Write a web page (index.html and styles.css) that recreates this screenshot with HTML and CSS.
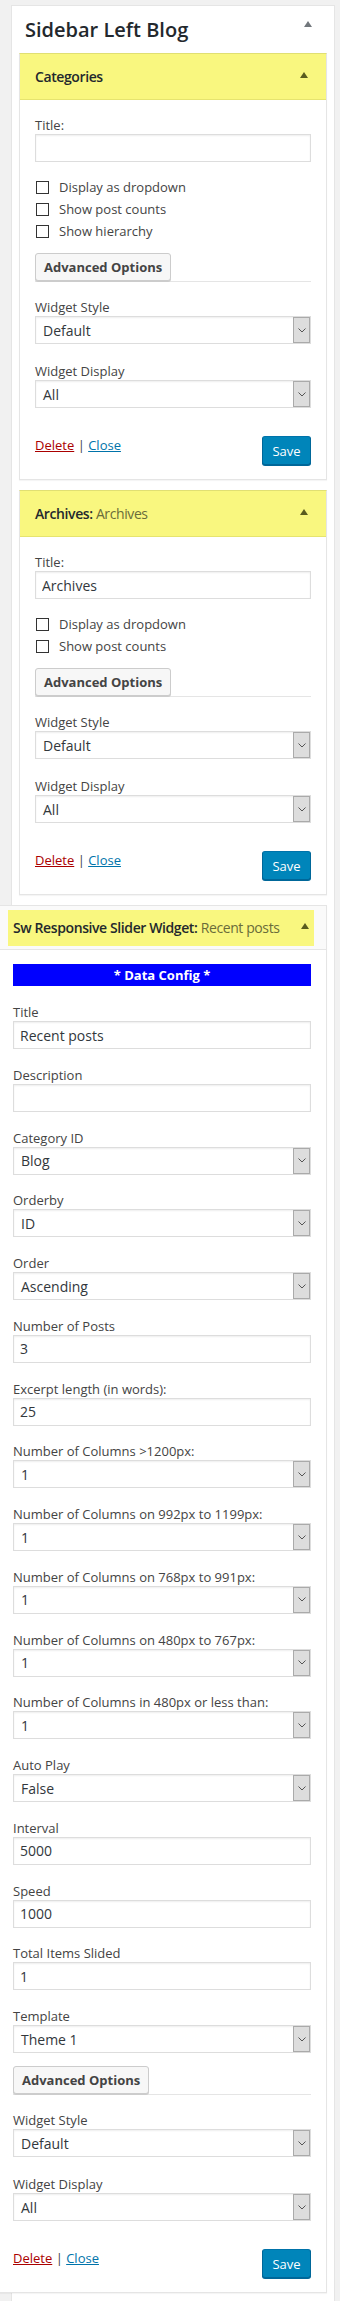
FILE: index.html
```html
<!DOCTYPE html>
<html lang="en">
<head>
  <meta charset="UTF-8">
  <meta name="viewport" content="width=device-width, initial-scale=1.0">
  <title>Sidebar Left Blog</title>
  <link rel="stylesheet" href="styles.css">
</head>
<body>
  <div class="sidebar">
    <div class="sidebar-head">
      <h2>Sidebar Left Blog</h2>
      <span class="toggle"></span>
    </div>

    <!-- Categories -->
    <div class="widget">
      <div class="widget-top">
        <h3>Categories</h3>
        <span class="toggle"></span>
      </div>
      <div class="widget-inside">
        <div class="field">
          <label>Title:</label>
          <input type="text" value="">
        </div>
        <div class="checks">
          <label class="check"><input type="checkbox"> Display as dropdown</label>
          <label class="check"><input type="checkbox"> Show post counts</label>
          <label class="check"><input type="checkbox"> Show hierarchy</label>
        </div>
        <div class="adv"><button class="btn">Advanced Options</button></div>
        <div class="field style-field">
          <label>Widget Style</label>
          <div class="select"><span>Default</span><span class="select-arrow"><svg width="8" height="5" viewBox="0 0 8 5"><path d="M0.5 0.5 L4 4 L7.5 0.5" fill="none" stroke="#555" stroke-width="1"/></svg></span></div>
        </div>
        <div class="field display-field">
          <label>Widget Display</label>
          <div class="select"><span>All</span><span class="select-arrow"><svg width="8" height="5" viewBox="0 0 8 5"><path d="M0.5 0.5 L4 4 L7.5 0.5" fill="none" stroke="#555" stroke-width="1"/></svg></span></div>
        </div>
        <div class="actions">
          <div class="links"><a class="delete">Delete</a> | <a class="close">Close</a></div>
          <button class="save">Save</button>
        </div>
      </div>
    </div>

    <!-- Archives -->
    <div class="widget">
      <div class="widget-top">
        <h3>Archives:<span class="in-title"> Archives</span></h3>
        <span class="toggle"></span>
      </div>
      <div class="widget-inside">
        <div class="field">
          <label>Title:</label>
          <input type="text" value="Archives">
        </div>
        <div class="checks">
          <label class="check"><input type="checkbox"> Display as dropdown</label>
          <label class="check"><input type="checkbox"> Show post counts</label>
        </div>
        <div class="adv"><button class="btn">Advanced Options</button></div>
        <div class="field style-field">
          <label>Widget Style</label>
          <div class="select"><span>Default</span><span class="select-arrow"><svg width="8" height="5" viewBox="0 0 8 5"><path d="M0.5 0.5 L4 4 L7.5 0.5" fill="none" stroke="#555" stroke-width="1"/></svg></span></div>
        </div>
        <div class="field display-field">
          <label>Widget Display</label>
          <div class="select"><span>All</span><span class="select-arrow"><svg width="8" height="5" viewBox="0 0 8 5"><path d="M0.5 0.5 L4 4 L7.5 0.5" fill="none" stroke="#555" stroke-width="1"/></svg></span></div>
        </div>
        <div class="actions">
          <div class="links"><a class="delete">Delete</a> | <a class="close">Close</a></div>
          <button class="save">Save</button>
        </div>
      </div>
    </div>

    <!-- Sw Responsive Slider (wide widget) -->
    <div class="widget wide">
      <div class="widget-top">
        <div class="highlight">
          <h3>Sw Responsive Slider Widget:<span class="in-title"> Recent posts</span></h3>
          <span class="toggle"></span>
        </div>
      </div>
      <div class="widget-inside">
        <div class="data-config">* Data Config *</div>
        <div class="sw-fields">
          <div class="field"><label>Title</label><input type="text" value="Recent posts"></div>
          <div class="field"><label>Description</label><input type="text" value=""></div>
          <div class="field"><label>Category ID</label><div class="select"><span>Blog</span><span class="select-arrow"><svg width="8" height="5" viewBox="0 0 8 5"><path d="M0.5 0.5 L4 4 L7.5 0.5" fill="none" stroke="#555" stroke-width="1"/></svg></span></div></div>
          <div class="field"><label>Orderby</label><div class="select"><span>ID</span><span class="select-arrow"><svg width="8" height="5" viewBox="0 0 8 5"><path d="M0.5 0.5 L4 4 L7.5 0.5" fill="none" stroke="#555" stroke-width="1"/></svg></span></div></div>
          <div class="field"><label>Order</label><div class="select"><span>Ascending</span><span class="select-arrow"><svg width="8" height="5" viewBox="0 0 8 5"><path d="M0.5 0.5 L4 4 L7.5 0.5" fill="none" stroke="#555" stroke-width="1"/></svg></span></div></div>
          <div class="field"><label>Number of Posts</label><input type="text" value="3"></div>
          <div class="field"><label>Excerpt length (in words):</label><input type="text" value="25"></div>
          <div class="field"><label>Number of Columns &gt;1200px:</label><div class="select"><span>1</span><span class="select-arrow"><svg width="8" height="5" viewBox="0 0 8 5"><path d="M0.5 0.5 L4 4 L7.5 0.5" fill="none" stroke="#555" stroke-width="1"/></svg></span></div></div>
          <div class="field"><label>Number of Columns on 992px to 1199px:</label><div class="select"><span>1</span><span class="select-arrow"><svg width="8" height="5" viewBox="0 0 8 5"><path d="M0.5 0.5 L4 4 L7.5 0.5" fill="none" stroke="#555" stroke-width="1"/></svg></span></div></div>
          <div class="field"><label>Number of Columns on 768px to 991px:</label><div class="select"><span>1</span><span class="select-arrow"><svg width="8" height="5" viewBox="0 0 8 5"><path d="M0.5 0.5 L4 4 L7.5 0.5" fill="none" stroke="#555" stroke-width="1"/></svg></span></div></div>
          <div class="field"><label>Number of Columns on 480px to 767px:</label><div class="select"><span>1</span><span class="select-arrow"><svg width="8" height="5" viewBox="0 0 8 5"><path d="M0.5 0.5 L4 4 L7.5 0.5" fill="none" stroke="#555" stroke-width="1"/></svg></span></div></div>
          <div class="field"><label>Number of Columns in 480px or less than:</label><div class="select"><span>1</span><span class="select-arrow"><svg width="8" height="5" viewBox="0 0 8 5"><path d="M0.5 0.5 L4 4 L7.5 0.5" fill="none" stroke="#555" stroke-width="1"/></svg></span></div></div>
          <div class="field"><label>Auto Play</label><div class="select"><span>False</span><span class="select-arrow"><svg width="8" height="5" viewBox="0 0 8 5"><path d="M0.5 0.5 L4 4 L7.5 0.5" fill="none" stroke="#555" stroke-width="1"/></svg></span></div></div>
          <div class="field"><label>Interval</label><input type="text" value="5000"></div>
          <div class="field"><label>Speed</label><input type="text" value="1000"></div>
          <div class="field"><label>Total Items Slided</label><input type="text" value="1"></div>
          <div class="field"><label>Template</label><div class="select"><span>Theme 1</span><span class="select-arrow"><svg width="8" height="5" viewBox="0 0 8 5"><path d="M0.5 0.5 L4 4 L7.5 0.5" fill="none" stroke="#555" stroke-width="1"/></svg></span></div></div>
        </div>
        <div class="adv"><button class="btn">Advanced Options</button></div>
        <div class="field style-field">
          <label>Widget Style</label>
          <div class="select"><span>Default</span><span class="select-arrow"><svg width="8" height="5" viewBox="0 0 8 5"><path d="M0.5 0.5 L4 4 L7.5 0.5" fill="none" stroke="#555" stroke-width="1"/></svg></span></div>
        </div>
        <div class="field display-field">
          <label>Widget Display</label>
          <div class="select"><span>All</span><span class="select-arrow"><svg width="8" height="5" viewBox="0 0 8 5"><path d="M0.5 0.5 L4 4 L7.5 0.5" fill="none" stroke="#555" stroke-width="1"/></svg></span></div>
        </div>
        <div class="actions">
          <div class="links"><a class="delete">Delete</a> | <a class="close">Close</a></div>
          <button class="save">Save</button>
        </div>
      </div>
    </div>
  </div>
</body>
</html>
```

FILE: styles.css
```css
body {
  margin: 0;
  background: #f1f1f1;
  font-family: "Open Sans", "Noto Sans", Arial, sans-serif;
  font-size: 13px;
  color: #444;
}

.sidebar {
  box-sizing: border-box;
  width: 324px;
  margin: 5px 0 0 11px;
  padding: 0 7px 30px 7px;
  background: #fff;
  border: 1px solid #e5e5e5;
}

.sidebar-head {
  display: flex;
  justify-content: space-between;
  align-items: flex-start;
  height: 47px;
  box-sizing: border-box;
  padding: 12px 15px 0 6px;
}

.sidebar-head h2 {
  margin: 0;
  font-size: 20px;
  line-height: 24px;
  font-weight: 600;
  color: #23282d;
}

.toggle {
  width: 0;
  height: 0;
  border-left: 4px solid transparent;
  border-right: 4px solid transparent;
  border-bottom: 6px solid #72777c;
}

.sidebar-head .toggle {
  margin-top: 3px;
}

/* widgets */
.widget {
  background: #fff;
  border: 1px solid #e5e5e5;
  border-top-color: #e0df73;
  box-shadow: 0 1px 1px rgba(0, 0, 0, 0.04);
  margin-bottom: 10px;
}

.widget-top {
  display: flex;
  justify-content: space-between;
  align-items: center;
  height: 46px;
  box-sizing: border-box;
  padding: 0 18px 0 15px;
  background: #f9f77f;
  border-bottom: 1px solid #e6e46f;
}

.widget-top h3 {
  margin: 0;
  font-size: 14px;
  line-height: 18px;
  font-weight: 600;
  letter-spacing: -0.4px;
  color: #23282d;
}

.widget-top .toggle {
  border-bottom-color: #5a5c1e;
  margin-top: -4px;
}

.in-title {
  font-weight: 400;
  color: #6a6c3a;
}

.widget-inside {
  padding: 16px 15px 14px 15px;
}

/* wide widget grows to the left */
.widget.wide {
  margin-left: -22px;
  border-top-color: #e5e5e5;
  margin-bottom: 0;
}

.wide .widget-top {
  height: 44px;
  padding: 4px 12px 3px 10px;
  background: #fafafa;
  border-bottom: 1px solid #e5e5e5;
}

.wide .highlight {
  flex: 1;
  height: 36px;
  display: flex;
  justify-content: space-between;
  align-items: center;
  padding: 0 5px 0 5px;
  background: #f9f77f;
}

.wide .widget-inside {
  padding-top: 14px;
}

.data-config {
  height: 22px;
  line-height: 22px;
  background: #0000ff;
  color: #fff;
  font-weight: 700;
  text-align: center;
  margin-bottom: 17px;
}

.sw-fields .field {
  margin-bottom: 16.75px;
}

.sw-fields .field:last-child {
  margin-bottom: 13px;
}

/* form bits */
.field label {
  display: block;
  line-height: 18px;
}

.field input,
.select {
  display: block;
  box-sizing: border-box;
  width: 100%;
  height: 28px;
  margin: 0;
  padding: 0 6px;
  border: 1px solid #ddd;
  box-shadow: inset 0 1px 2px rgba(0, 0, 0, 0.07);
  background: #fff;
  font-family: inherit;
  font-size: 14px;
  color: #32373c;
}

.select {
  display: flex;
  align-items: center;
  padding: 0 0 0 7px;
}

.select span:first-child {
  flex: 1;
}

.select-arrow {
  box-sizing: border-box;
  width: 17px;
  height: 26px;
  background: #dddddd;
  border: 1px solid #aaa;
  display: flex;
  align-items: center;
  justify-content: center;
}

.checks {
  margin-top: 14px;
}

.check {
  display: flex;
  align-items: center;
  height: 22px;
  gap: 10px;
}

.check input {
  appearance: none;
  -webkit-appearance: none;
  box-sizing: border-box;
  width: 13px;
  height: 13px;
  margin: 0 0 0 1px;
  border: 1px solid #333;
  background: #fff;
}

.adv {
  margin-top: 11px;
  border-bottom: 1px solid #e5e5e5;
}

.btn {
  display: block;
  height: 28px;
  padding: 0 8px;
  background: #f7f7f7;
  border: 1px solid #ccc;
  border-radius: 3px;
  box-shadow: 0 1px 0 #ccc;
  font-family: inherit;
  font-size: 13px;
  font-weight: 700;
  color: #444;
}

.style-field {
  margin-top: 16px;
}

.display-field {
  margin-top: 18px;
}

.actions {
  display: flex;
  justify-content: space-between;
  align-items: flex-start;
  margin-top: 28px;
}

.links {
  line-height: 18px;
}

.links a {
  text-decoration: underline;
}

.delete {
  color: #a00;
}

.close {
  color: #0073aa;
}

.save {
  height: 29px;
  width: 49px;
  padding: 0;
  background: #0085ba;
  border: 1px solid #0073aa;
  border-color: #0073aa #006799 #006799;
  border-radius: 3px;
  box-shadow: 0 1px 0 #006799;
  color: #fff;
  font-family: inherit;
  font-size: 13px;
}
```
